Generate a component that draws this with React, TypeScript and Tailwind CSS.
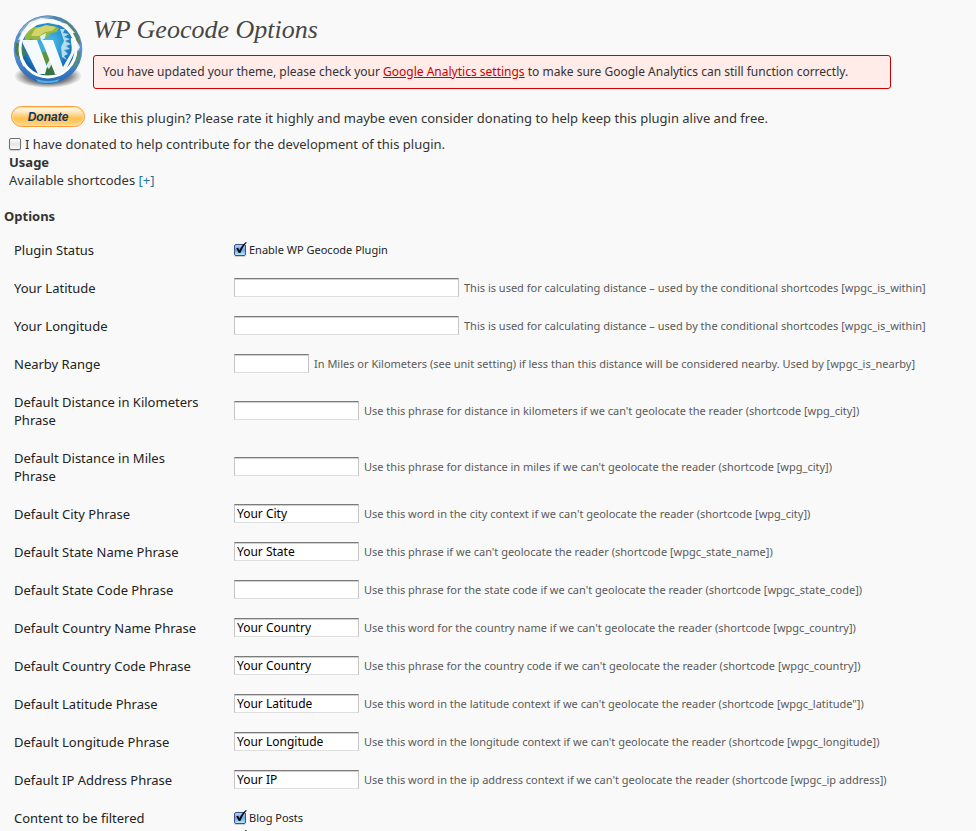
import { useState } from "react";

type Field = {
  id: string;
  label: string;
  hint: string;
  value?: string;
  size?: "wide" | "narrow" | "phrase";
};

const fields: Field[] = [
  { id: "lat", label: "Your Latitude", size: "wide", hint: "This is used for calculating distance – used by the conditional shortcodes [wpgc_is_within]" },
  { id: "lng", label: "Your Longitude", size: "wide", hint: "This is used for calculating distance – used by the conditional shortcodes [wpgc_is_within]" },
  { id: "range", label: "Nearby Range", size: "narrow", hint: "In Miles or Kilometers (see unit setting) if less than this distance will be considered nearby. Used by [wpgc_is_nearby]" },
  { id: "km", label: "Default Distance in Kilometers Phrase", hint: "Use this phrase for distance in kilometers if we can't geolocate the reader (shortcode [wpg_city])" },
  { id: "miles", label: "Default Distance in Miles Phrase", hint: "Use this phrase for distance in miles if we can't geolocate the reader (shortcode [wpg_city])" },
  { id: "city", label: "Default City Phrase", value: "Your City", hint: "Use this word in the city context if we can't geolocate the reader (shortcode [wpg_city])" },
  { id: "state", label: "Default State Name Phrase", value: "Your State", hint: "Use this phrase if we can't geolocate the reader (shortcode [wpgc_state_name])" },
  { id: "statecode", label: "Default State Code Phrase", hint: "Use this phrase for the state code if we can't geolocate the reader (shortcode [wpgc_state_code])" },
  { id: "country", label: "Default Country Name Phrase", value: "Your Country", hint: "Use this word for the country name if we can't geolocate the reader (shortcode [wpgc_country])" },
  { id: "countrycode", label: "Default Country Code Phrase", value: "Your Country", hint: "Use this phrase for the country code if we can't geolocate the reader (shortcode [wpgc_country])" },
  { id: "latphrase", label: "Default Latitude Phrase", value: "Your Latitude", hint: "Use this word in the latitude context if we can't geolocate the reader (shortcode [wpgc_latitude\"])" },
  { id: "lngphrase", label: "Default Longitude Phrase", value: "Your Longitude", hint: "Use this word in the longitude context if we can't geolocate the reader (shortcode [wpgc_longitude])" },
  { id: "ip", label: "Default IP Address Phrase", value: "Your IP", hint: "Use this word in the ip address context if we can't geolocate the reader (shortcode [wpgc_ip address])" },
];

const widths = { wide: "w-[225px]", narrow: "w-[75px]", phrase: "w-[125px]" };

function Checkbox({ id, checked = false, name }: { id: string; checked?: boolean; name?: string }) {
  return (
    <span className="relative inline-block size-3 shrink-0">
      <input
        id={id}
        type="checkbox"
        defaultChecked={checked}
        aria-label={name}
        className="peer block size-3 appearance-none rounded-[2px] border border-[#6d6d6d] bg-linear-to-b from-white via-[#e4e4e4] to-[#fafafa] shadow-[0_1px_1px_#0000002e] checked:border-[#3c4f86] checked:from-[#b5d0f3] checked:via-[#6ba6e8] checked:to-[#b4edff]"
      />
      <svg viewBox="0 0 14 14" className="pointer-events-none absolute -top-[2px] left-0 hidden size-3.5 peer-checked:block" aria-hidden="true">
        <path d="M2.2 6.3 4.2 5.7 5.5 8.2C7 5 9 2.3 11.6.3L13 .2C9.8 3.7 7.8 7 6.4 11H4.7Z" fill="#05070d" />
      </svg>
    </span>
  );
}

function Logo() {
  return (
    <svg viewBox="-1 1 76 78" className="h-[78px] w-[76px] shrink-0" role="img" aria-label="WordPress globe">
      <defs>
        <radialGradient id="sea" cx="50%" cy="40%" r="58%">
          <stop offset="0" stopColor="#4fc3ea" />
          <stop offset=".55" stopColor="#2590cf" />
          <stop offset="1" stopColor="#0a4c9b" />
        </radialGradient>
        <linearGradient id="rim" x1="0" y1="0" x2="0" y2="1">
          <stop offset="0" stopColor="#4b83ad" />
          <stop offset=".5" stopColor="#5b93d5" />
          <stop offset="1" stopColor="#2769b5" />
        </linearGradient>
        <radialGradient id="shade">
          <stop offset="0" stopColor="#222" stopOpacity=".9" />
          <stop offset=".65" stopColor="#333" stopOpacity=".6" />
          <stop offset="1" stopColor="#333" stopOpacity="0" />
        </radialGradient>
        <clipPath id="ball"><circle cx="38" cy="38" r="33" /></clipPath>
        <clipPath id="disc"><circle cx="38" cy="38" r="27" /></clipPath>
      </defs>
      <ellipse cx="38" cy="65" rx="34" ry="12" fill="url(#shade)" />
      <circle cx="38" cy="38.500" r="34.300" fill="url(#rim)" />
      <g clipPath="url(#ball)">
        <circle cx="38" cy="38" r="29" fill="url(#sea)" />
        <path d="M16 21 22 16 30 16 42 15 49 17 47 21 41 22 38 26 31 27 27 30 21 28 14 31Z" fill="#92b843" />
        <path d="M25 18 36 14 46 16 42 20 35 21 29 25 21 25Z" fill="#d3d666" />
        <path d="M5 31 12 34 16 43 11 49 5 42Z" fill="#497b4f" />
        <path d="M27 42 36 41 42 46 41 53 37 53 30 50Z" fill="#5d9440" />
        <path d="M35 57 41 48 46 57 45 66 33 66Z" fill="#397044" />
        <path d="M55 9 66 18 71 33 67 31 62 22 53 14Z" fill="#598262" />
        <path d="M67 40 71 42 67 55 63 58Z" fill="#578c76" />
        <path d="M12 21 20 11 31 7 43 8 52 11 48 14 38 12 27 14 18 20 12 28 8 29ZM51 11 57 13 65 22 60 22 55 16ZM66 29 70 36 68 40 65 35ZM10 47 14 49 18 57 13 55Z" fill="#e8f1ed" />
        <path d="M50 18 55 18 53 22 59 23 54 26 60 28 55 30 61 33 56 35 60 38 54 39 58 43 54 45 57 49 52 46 51 36 54 30Z" fill="#e5f4fa" opacity=".75" />
        <path d="M30 25 36 22 35 27 31 30ZM36 55 40 48 45 45 43 51 39 58Z" fill="#eff7f5" opacity=".9" />
      </g>
      <circle cx="38" cy="38" r="28" fill="none" stroke="#fff" strokeWidth="3" />
      <g clipPath="url(#disc)" fill="#fff" fillOpacity=".95">
        <path d="M12 29H27L37 56 35 63H28L13 33ZM31 29H43L53 56 61 42C63 36 60 31 61 27L66 27 67 36 54 63H45L34 35Z" />
      </g>
      <path d="M9 22Q21 2 45 6Q27 7 13 23Z" fill="#fff" opacity=".3" />
      <path d="M26 68Q38 72 50 68L47 71Q37 73 28 71Z" fill="#6ad4ff" opacity=".65" />
    </svg>
  );
}

export default function App() {
  const [open, setOpen] = useState(false);
  return (
    <main className="h-screen overflow-hidden bg-[#f9f9f9] font-['Noto_Sans','Lucida_Grande',sans-serif] text-[13px] leading-[18px] text-[#333]">
      <header className="flex items-start gap-2 pt-3 pr-4 pl-[9px]">
        <Logo />
        <div className="pt-px">
          <h1 className="font-['Liberation_Serif',Georgia,serif] text-[26px] leading-[34px] text-[#464646] italic">WP Geocode Options</h1>
          <p className="mt-2 w-[798px] max-w-full rounded-[3px] border border-[#c00] bg-[#ffebe8] px-[9px] py-[7px] text-[12px]">
            You have updated your theme, please check your{" "}
            <a href="#analytics" className="text-[#c00] underline">Google Analytics settings</a>{" "}
            to make sure Google Analytics can still function correctly.
          </p>
        </div>
      </header>

      <section className="pl-[9px]">
        <div className="mt-4 flex items-center gap-2 pl-0.5">
          <button
            type="button"
            className="h-[21px] w-[74px] rounded-full border border-[#ff9933] bg-linear-to-b from-[#fff3d8] from-15% via-[#ffc04d] via-60% to-[#ffd78a] font-['Liberation_Sans',Arial,sans-serif] text-[12px] leading-[18px] font-bold text-[#0f3560] italic shadow-[inset_0_0_0_1px_#ffe1a0]"
          >
            Donate
          </button>
          <p className="pt-0.5">Like this plugin? Please rate it highly and maybe even consider donating to help keep this plugin alive and free.</p>
        </div>
        <div className="mt-2 flex items-center gap-1">
          <Checkbox id="donated" />
          <label htmlFor="donated">I have donated to help contribute for the development of this plugin.</label>
        </div>
        <h2 className="font-bold">Usage</h2>
        <p>
          Available shortcodes{" "}
          <button type="button" aria-expanded={open} onClick={() => setOpen(!open)} className="text-[#21759b]">[+]</button>
        </p>
      </section>

      <h2 className="mt-[18px] pl-1 font-bold">Options</h2>
      <form className="mt-[6px] pl-[14px] text-[#222]">
        <div className="flex items-center py-[10px]">
          <span className="w-[220px] shrink-0">Plugin Status</span>
          <Checkbox id="enable" checked />
          <label htmlFor="enable" className="pl-[3px] text-[11px]">Enable WP Geocode Plugin</label>
        </div>
        {fields.map((f) => (
          <div key={f.id} className="flex items-center">
            <label htmlFor={f.id} className="w-[220px] shrink-0 py-[10px] pr-[30px]">{f.label}</label>
            <input
              id={f.id}
              type="text"
              defaultValue={f.value}
              className={`${widths[f.size ?? "phrase"]} mb-px h-[19px] shrink-0 border border-[#c4c4c4] border-t-[#7b7b7b] border-b-[#dedede] bg-white px-0.5 text-[12px] leading-4 text-black shadow-[inset_0_1px_0_#d0d0d0]`}
            />
            <span className="pl-[5px] text-[11px] whitespace-nowrap text-[#5a5a5a]">{f.hint}</span>
          </div>
        ))}
        <div className="flex items-start py-[10px]">
          <span className="w-[220px] shrink-0">Content to be filtered</span>
          <div className="flex flex-col gap-0.5">
            <div className="flex h-[18px] items-center">
              <Checkbox id="posts" checked />
              <label htmlFor="posts" className="pl-[3px] text-[11px]">Blog Posts</label>
            </div>
            <div className="flex h-[18px] items-center">
              <Checkbox id="pages" checked name="Pages" />
            </div>
          </div>
        </div>
      </form>
    </main>
  );
}
